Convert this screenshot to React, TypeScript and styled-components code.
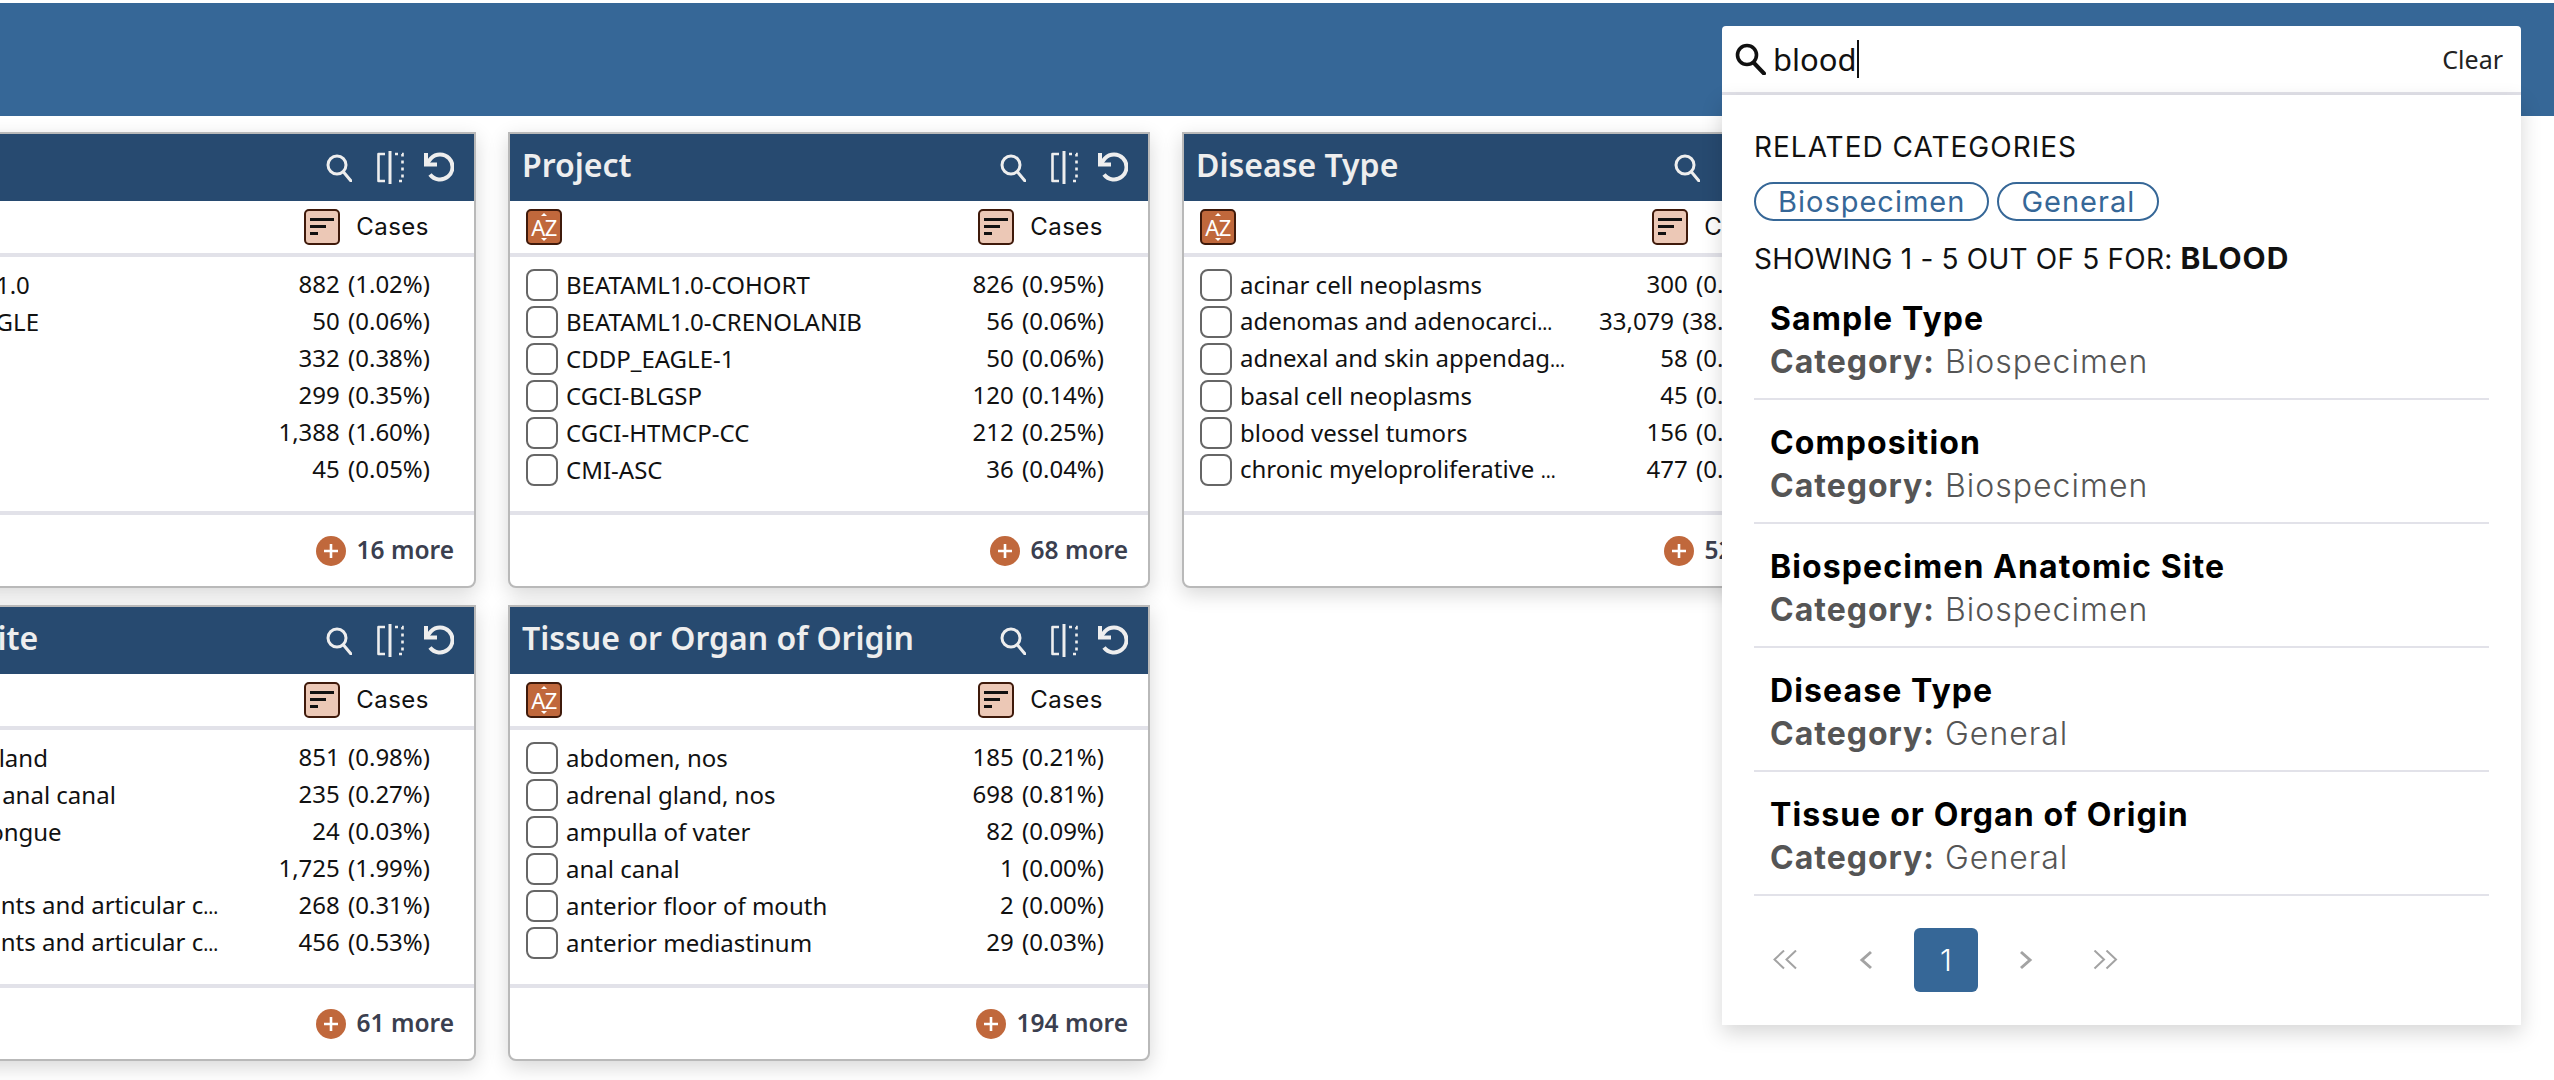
import React from "react";
import styled, { createGlobalStyle } from "styled-components";

const NOTO = `"Noto Sans", "Open Sans", sans-serif`;
const HEAD = `Inter, "Noto Sans", sans-serif`;

const Global = createGlobalStyle`
  html, body { margin: 0; padding: 0; background: #fff; overflow: hidden; }
  body { width: 2554px; height: 1080px; font-family: ${NOTO}; }
`;

const Page = styled.div`
  width: 2554px;
  height: 1080px;
  overflow: hidden;
  padding-top: 3px;
  box-sizing: border-box;
`;
const TopBar = styled.header`
  position: relative;
  height: 113px;
  background: #366797;
`;
const CardGrid = styled.main`
  display: grid;
  grid-template-columns: repeat(4, 642px);
  column-gap: 32px;
  row-gap: 17px;
  margin: 16px 0 0 -166px;
`;
const Card = styled.section`
  width: 642px;
  height: 456px;
  box-sizing: border-box;
  display: flex;
  flex-direction: column;
  background: #fff;
  border: 2px solid #b9b9b9;
  border-radius: 0 0 8px 8px;
  box-shadow: 0 6px 20px rgba(0, 0, 0, 0.16);
`;
const CardHead = styled.div`
  height: 67px;
  flex: none;
  display: flex;
  align-items: center;
  justify-content: space-between;
  padding: 0 20px 0 12px;
  background: #274a70;
  color: #eeeeee;
`;
const CardTitle = styled.h2`
  margin: 0 0 6px;
  font: 600 32px/1 ${NOTO};
  white-space: nowrap;
`;
const CardActions = styled.div`
  display: flex;
  align-items: center;
  gap: 20px;
  color: #eeeeee;
  svg:first-child { margin-right: 5px; }
`;
const SortBar = styled.div`
  flex: none;
  height: 56px;
  display: flex;
  align-items: center;
  justify-content: space-between;
  padding: 0 45px 0 16px;
  box-sizing: border-box;
  border-bottom: 4px solid #e2e2e9;
`;
const AzBadge = styled.span`
  position: relative;
  width: 36px;
  height: 36px;
  box-sizing: border-box;
  display: flex;
  align-items: center;
  justify-content: center;
  border: 2px solid #3f1a0b;
  border-radius: 5px;
  background: #c0683c;
  color: #fff;
  font: 400 22px/1 ${NOTO};
  letter-spacing: -0.5px;
  &::before, &::after {
    content: "";
    position: absolute;
    left: 13px;
    border-left: 3px solid transparent;
    border-right: 3px solid transparent;
  }
  &::before { top: 2px; border-bottom: 3px solid #fff; }
  &::after { bottom: 2px; border-top: 3px solid #fff; }
`;
const CasesSort = styled.div`
  display: flex;
  align-items: center;
  gap: 16px;
  font: 400 24px/1 ${HEAD};
  letter-spacing: 0.5px;
  color: #111;
`;
const SortBadge = styled.span`
  width: 36px;
  height: 36px;
  box-sizing: border-box;
  display: flex;
  align-items: center;
  justify-content: center;
  border: 2px solid #3f1a0b;
  border-radius: 5px;
  background: #ecc8b6;
  color: #111;
`;
const RowList = styled.ul`
  list-style: none;
  margin: 0;
  padding: 9px 44px 0 16px;
  height: 254px;
  box-sizing: border-box;
  flex: none;
`;
const Row = styled.li`
  height: 37px;
  display: flex;
  align-items: center;
  font: 400 24px/32px ${NOTO};
  color: #111;
`;
const Check = styled.span`
  width: 32px;
  height: 32px;
  flex: none;
  box-sizing: border-box;
  border: 2px solid #666;
  border-radius: 8px;
  background: #fff;
  margin-right: 8px;
`;
const RowName = styled.span`
  white-space: nowrap;
`;
const Dots = styled.span`
  font-size: 19px;
`;
const RowCount = styled.span`
  margin-left: auto;
  white-space: nowrap;
  word-spacing: 2px;
  position: relative;
  top: -1px;
`;
const CardFoot = styled.div`
  flex: 1;
  border-top: 4px solid #e2e2e9;
  display: flex;
  align-items: center;
  justify-content: flex-end;
  gap: 10px;
  padding: 0 20px 0 0;
  font: 600 24.5px/1 ${NOTO};
  color: #3b3f4f;
`;
const MoreDot = styled.span`
  width: 30px;
  height: 30px;
  border-radius: 50%;
  background: #c0683c;
  display: flex;
  align-items: center;
  justify-content: center;
`;

const SearchWrap = styled.div`
  position: absolute;
  top: 23px;
  right: 33px;
  width: 799px;
  z-index: 5;
`;
const SearchBox = styled.div`
  height: 69px;
  box-sizing: border-box;
  display: flex;
  align-items: center;
  padding: 0 18px 0 13px;
  background: #fff;
  border-bottom: 3px solid #e2e2e9;
  border-radius: 4px 4px 0 0;
`;
const SearchText = styled.span`
  margin-left: 7px;
  font: 400 31px/38px ${NOTO};
  color: #111;
  border-right: 2px solid #111;
`;
const ClearBtn = styled.span`
  margin-left: auto;
  font: 400 25px/1 ${NOTO};
  color: #222;
`;
const Panel = styled.div`
  height: 930px;
  box-sizing: border-box;
  padding: 35px 32px 0;
  background: #fff;
  box-shadow: 0 8px 20px rgba(0, 0, 0, 0.16);
`;
const Label = styled.div`
  font: 400 28px/34px ${HEAD};
  color: #111;
  letter-spacing: 1px;
  white-space: nowrap;
`;
const ShowLabel = styled(Label)`
  letter-spacing: 0.2px;
`;
const ChipRow = styled.div`
  display: flex;
  gap: 8px;
  margin: 18px 0 20px;
`;
const Chip = styled.span`
  height: 39px;
  box-sizing: border-box;
  padding: 0 22px;
  display: flex;
  align-items: center;
  border: 2px solid #366797;
  border-radius: 20px;
  font: 400 29px/1 ${HEAD};
  color: #366797;
  letter-spacing: 1px;
`;
const Strong = styled.strong`
  font-weight: 700;
  font-size: 30px;
  letter-spacing: 1px;
`;
const Result = styled.div`
  height: 124px;
  box-sizing: border-box;
  padding: 20px 16px 0;
  border-bottom: 2px solid #e2e2e9;
`;
const ResultTitle = styled.div`
  font: 700 32px/45px ${HEAD};
  color: #000;
  letter-spacing: 1.1px;
`;
const ResultCat = styled.div`
  font: 300 32px/42px ${HEAD};
  color: #555;
  letter-spacing: 1px;
  b { font-weight: 700; }
`;
const Pager = styled.nav`
  display: flex;
  gap: 16px;
  margin-top: 32px;
`;
const PageBtn = styled.span<{ $active?: boolean }>`
  width: 64px;
  height: 64px;
  display: flex;
  align-items: center;
  justify-content: center;
  border-radius: 6px;
  background: ${(p) => (p.$active ? "#366797" : "transparent")};
  color: ${(p) => (p.$active ? "#fff" : "#a3a3a3")};
  font: 300 30px/1 ${HEAD};
`;

const SearchIcon = () => (
  <svg width="26" height="28" viewBox="0 0 26 28" fill="none" stroke="currentColor" strokeWidth="3" aria-hidden>
    <circle cx="11" cy="11" r="9" />
    <path d="M17.5 18l7.5 9" strokeLinecap="round" />
  </svg>
);
const SplitIcon = () => (
  <svg width="27" height="33" viewBox="0 0 27 33" fill="none" stroke="currentColor" strokeWidth="2.6" aria-hidden>
    <path d="M8 3H1.5V30H8" strokeLinejoin="round" />
    <path d="M13 0V33" strokeWidth="3" />
    <path d="M18 3H25.5V30H18" strokeDasharray="3 4" />
  </svg>
);
const ResetIcon = () => (
  <svg width="30" height="32" viewBox="0 0 30 32" fill="none" stroke="currentColor" strokeWidth="4" aria-hidden>
    <path d="M2 1V12.5H13" />
    <path d="M2.5 12L7 6.3A12.5 12.5 0 1 1 6 22.5" />
  </svg>
);
const BarsIcon = () => (
  <svg width="26" height="20" viewBox="0 0 26 20" fill="currentColor" aria-hidden>
    <rect x="1" y="1" width="24" height="3" />
    <rect x="1" y="8" width="16" height="3" />
    <rect x="1" y="15" width="8" height="3" />
  </svg>
);
const PlusIcon = () => (
  <svg width="16" height="16" viewBox="0 0 16 16" stroke="#fff" strokeWidth="2.6" aria-hidden>
    <path d="M8 1V15M1 8H15" />
  </svg>
);
const BigSearch = () => (
  <svg width="31" height="32" viewBox="0 0 31 32" fill="none" stroke="#111" strokeWidth="3.6" aria-hidden>
    <circle cx="12" cy="12" r="9.5" />
    <path d="M19 20l10 10.5" strokeLinecap="round" strokeWidth="4" />
  </svg>
);
const Chev = ({ d, w = 2 }: { d: string; w?: number }) => (
  <svg width="26" height="20" viewBox="0 0 26 20" fill="none" stroke="currentColor" strokeWidth={w} aria-hidden>
    <path d={d} />
  </svg>
);

type CardData = { title: string; more: number; rows: [string, string][] };

const cards: CardData[] = [
  {
    title: "Program",
    more: 16,
    rows: [
      ["BEATAML1.0", "882 (1.02%)"],
      ["CDDP_EAGLE", "50 (0.06%)"],
      ["CGCI", "332 (0.38%)"],
      ["CMI", "299 (0.35%)"],
      ["CPTAC", "1,388 (1.60%)"],
      ["CTSP", "45 (0.05%)"],
    ],
  },
  {
    title: "Project",
    more: 68,
    rows: [
      ["BEATAML1.0-COHORT", "826 (0.95%)"],
      ["BEATAML1.0-CRENOLANIB", "56 (0.06%)"],
      ["CDDP_EAGLE-1", "50 (0.06%)"],
      ["CGCI-BLGSP", "120 (0.14%)"],
      ["CGCI-HTMCP-CC", "212 (0.25%)"],
      ["CMI-ASC", "36 (0.04%)"],
    ],
  },
  {
    title: "Disease Type",
    more: 52,
    rows: [
      ["acinar cell neoplasms", "300 (0.35%)"],
      ["adenomas and adenocarci…", "33,079 (38.21%)"],
      ["adnexal and skin appendag…", "58 (0.07%)"],
      ["basal cell neoplasms", "45 (0.05%)"],
      ["blood vessel tumors", "156 (0.18%)"],
      ["chronic myeloproliferative …", "477 (0.55%)"],
    ],
  },
  { title: "", more: 0, rows: [] },
  {
    title: "Primary Site",
    more: 61,
    rows: [
      ["adrenal gland", "851 (0.98%)"],
      ["anus and anal canal", "235 (0.27%)"],
      ["base of tongue", "24 (0.03%)"],
      ["bladder", "1,725 (1.99%)"],
      ["bones, joints and articular c…", "268 (0.31%)"],
      ["bones, joints and articular c…", "456 (0.53%)"],
    ],
  },
  {
    title: "Tissue or Organ of Origin",
    more: 194,
    rows: [
      ["abdomen, nos", "185 (0.21%)"],
      ["adrenal gland, nos", "698 (0.81%)"],
      ["ampulla of vater", "82 (0.09%)"],
      ["anal canal", "1 (0.00%)"],
      ["anterior floor of mouth", "2 (0.00%)"],
      ["anterior mediastinum", "29 (0.03%)"],
    ],
  },
];

const results = [
  ["Sample Type", "Biospecimen"],
  ["Composition", "Biospecimen"],
  ["Biospecimen Anatomic Site", "Biospecimen"],
  ["Disease Type", "General"],
  ["Tissue or Organ of Origin", "General"],
];

const Name = ({ text }: { text: string }) =>
  text.endsWith("…") ? (
    <RowName>
      {text.slice(0, -1)}
      <Dots>…</Dots>
    </RowName>
  ) : (
    <RowName>{text}</RowName>
  );

const FacetCard = ({ c }: { c: CardData }) => (
  <Card>
    <CardHead>
      <CardTitle>{c.title}</CardTitle>
      <CardActions>
        <SearchIcon />
        <SplitIcon />
        <ResetIcon />
      </CardActions>
    </CardHead>
    <SortBar>
      <AzBadge>AZ</AzBadge>
      <CasesSort>
        <SortBadge>
          <BarsIcon />
        </SortBadge>
        Cases
      </CasesSort>
    </SortBar>
    <RowList>
      {c.rows.map(([name, count], i) => (
        <Row key={i}>
          <Check />
          <Name text={name} />
          <RowCount>{count}</RowCount>
        </Row>
      ))}
    </RowList>
    <CardFoot>
      <MoreDot>
        <PlusIcon />
      </MoreDot>
      {c.more} more
    </CardFoot>
  </Card>
);

export default function App() {
  return (
    <Page>
      <Global />
      <TopBar>
        <SearchWrap>
          <SearchBox>
            <BigSearch />
            <SearchText>blood</SearchText>
            <ClearBtn>Clear</ClearBtn>
          </SearchBox>
          <Panel>
            <Label>RELATED CATEGORIES</Label>
            <ChipRow>
              <Chip>Biospecimen</Chip>
              <Chip>General</Chip>
            </ChipRow>
            <ShowLabel>
              SHOWING 1 - 5 OUT OF 5 FOR: <Strong>BLOOD</Strong>
            </ShowLabel>
            <div>
              {results.map(([t, cat]) => (
                <Result key={t}>
                  <ResultTitle>{t}</ResultTitle>
                  <ResultCat>
                    <b>Category:</b> {cat}
                  </ResultCat>
                </Result>
              ))}
            </div>
            <Pager>
              <PageBtn><Chev d="M11 .5L1.5 9.5 11 18.5M23 .5L13.5 9.5 23 18.5" /></PageBtn>
              <PageBtn><Chev w={3} d="M18 2L9 10l9 8" /></PageBtn>
              <PageBtn $active>1</PageBtn>
              <PageBtn><Chev w={3} d="M8 2l9 8-9 8" /></PageBtn>
              <PageBtn><Chev d="M1.5 .5L11 9.5 1.5 18.5M13.5 .5L23 9.5 13.5 18.5" /></PageBtn>
            </Pager>
          </Panel>
        </SearchWrap>
      </TopBar>
      <CardGrid>
        {cards.map((c, i) => (c.title ? <FacetCard key={i} c={c} /> : <span key={i} />))}
      </CardGrid>
    </Page>
  );
}
